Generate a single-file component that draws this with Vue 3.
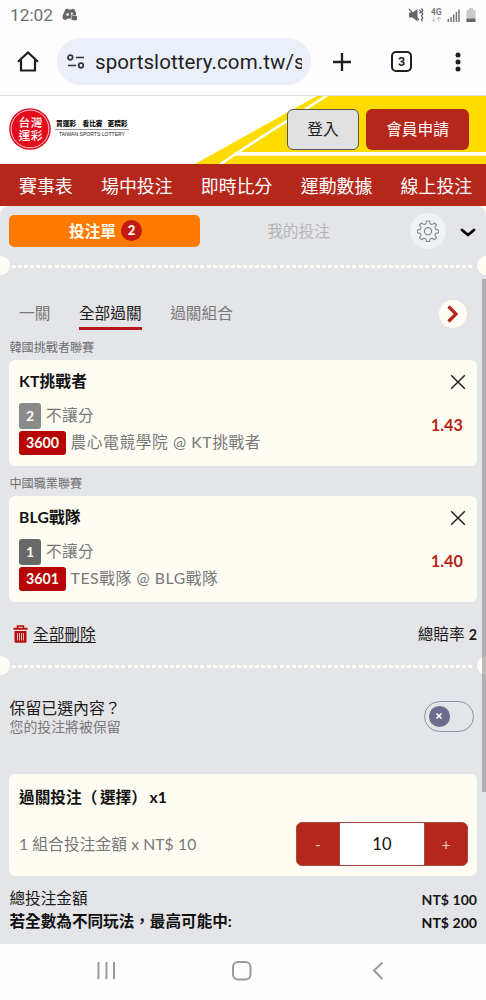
<script setup>
import { ref } from 'vue'

const nav = ['賽事表', '場中投注', '即時比分', '運動數據', '線上投注']
const tabs = ['一關', '全部過關', '過關組合']
const activeTab = ref(1)
const bets = ref([
  { league: '韓國挑戰者聯賽', title: 'KT挑戰者', pick: 2, market: '不讓分', code: '3600', match: '農心電競學院 @ KT挑戰者', odds: '1.43', shade: 'light' },
  { league: '中國職業聯賽', title: 'BLG戰隊', pick: 1, market: '不讓分', code: '3601', match: 'TES戰隊 @ BLG戰隊', odds: '1.40', shade: 'dark' }
])
const stake = ref(10)
</script>

<template>
  <div class="screen">
    <div class="status">
      <span class="clock">12:02</span>
      <svg class="discord" width="16" height="14" viewBox="0 0 16 14">
        <path d="M3.400 1.200 6 .6l.6 1h2.800l.6-1 2.600.8 1.600 4-.1 2.200H9v3H7.400L4.500 11l-.8 1.200L.9 11 .5 8z" fill="#666" />
        <circle cx="5.600" cy="6.600" r="1.300" fill="#fff" />
        <circle cx="9.800" cy="5.600" r="1.100" fill="#fff" />
        <path d="M9.500 8h5.500v4h-1.500l-1.200 1.500V12H9.500z" fill="#666" />
      </svg>
      <svg class="signals" width="70" height="18" viewBox="0 0 70 18">
        <path d="M1 6.500h3.500L9.500 3v12.500L4.500 11.500H1z" fill="#666" />
        <path d="M1 3l10 11" stroke="#666" stroke-width="1.400" />
        <path d="M11.500 4l1.500 1.700-1.500 1.700M13.500 2.500l1.300 1.800-1.300 1.900 1.300 1.900-1.300 1.900 1.300 1.900-1.300 1.900 1 1.500" fill="none" stroke="#666" stroke-width="1.300" />
        <text x="23" y="8.800" class="net" textLength="10.500">4G</text>
        <path d="M25.800 10.500v5m-2-2 2 2 2-2M30.700 16v-5m-2 2 2-2 2 2" fill="none" stroke="#bbb" stroke-width="1" />
        <path d="M40.300 16v-3M43 16v-5M45.700 16V8.500M48.400 16V6M51 16V3.500" stroke="#777" stroke-width="1.500" />
        <path d="M61 2h4v2h2.500v12h-9V4H61z" fill="#c9c9c9" />
        <path d="M58.500 12.500h9V16h-9z" fill="#666" />
      </svg>
    </div>

    <div class="browser">
      <svg class="home" width="24" height="24" viewBox="0 0 24 24">
        <path d="M2 11.800 12 2.500l10 9.300M5 10V20.500h14V10" fill="none" stroke="#1f1f1f" stroke-width="2.200" />
      </svg>
      <div class="address">
        <svg width="18" height="16" viewBox="0 0 18 16" fill="none" stroke="#333" stroke-width="1.700">
          <circle cx="3.300" cy="3.500" r="2.300" /><path d="M9 3.500h8M1 11.500h8" />
          <circle cx="14" cy="11.500" r="2.300" />
        </svg>
        <span class="url">sportslottery.com.tw/s</span>
      </div>
      <svg class="plus" width="20" height="20" viewBox="0 0 20 20"><path d="M1 10h18M10 1v18" stroke="#1f1f1f" stroke-width="2.300" /></svg>
      <div class="count">3</div>
      <svg class="dots" width="6" height="20" viewBox="0 0 6 20" fill="#1f1f1f"><circle cx="3" cy="3" r="2.500" /><circle cx="3" cy="10" r="2.500" /><circle cx="3" cy="17" r="2.500" /></svg>
    </div>

    <header class="brand">
      <svg class="stripes" width="486" height="69" viewBox="0 0 486 69">
        <path d="M195 69 317 1H486V69z" fill="#ffdc00" />
        <path d="M220 69.500 240 56 327 .5" fill="none" stroke="#fff" stroke-width="2.600" />
        <path d="M235 58.800H486" stroke="#fff" stroke-width="3.800" />
        <path d="M0 .5H486" stroke="#dedede" />
      </svg>
      <svg class="logo" width="130" height="44" viewBox="0 0 130 44">
        <circle cx="21" cy="22" r="20.800" fill="#e30b1c" />
        <circle cx="21" cy="22" r="18.900" fill="none" stroke="#fff" stroke-width=".8" />
        <text x="9.500" y="20" class="seal" textLength="24">台灣</text>
        <text x="9.500" y="32.500" class="seal" textLength="24">運彩</text>
        <text x="47" y="19" class="slogan" textLength="20">買運彩</text>
        <text x="73.500" y="19" class="slogan" textLength="20">看比賽</text>
        <text x="98.500" y="19" class="slogan" textLength="20">更精彩</text>
        <path d="M46 22.500h74" stroke="#777" stroke-width=".8" />
        <text x="50" y="29" class="english" textLength="66" lengthAdjust="spacingAndGlyphs">TAIWAN SPORTS LOTTERY</text>
      </svg>
      <button class="login">登入</button>
      <button class="apply">會員申請</button>
    </header>

    <nav class="menu"><span v-for="n in nav" :key="n">{{ n }}</span></nav>

    <main class="panel-wrap">
      <div class="panel">
        <div class="slip-head">
          <div class="slip-on">投注單<b>{{ bets.length }}</b></div>
          <div class="slip-off">我的投注</div>
          <div class="gear">
            <svg width="22" height="22" viewBox="0 0 22 22" fill="none" stroke="#85878a" stroke-width="1.100" stroke-linejoin="round">
              <path d="M9.500 1h3l.6 2.700 1.900.8L17.500 3l2 2-1.600 2.500.9 1.900 2.700.6v2.700l-2.700.7-.9 1.900 1.600 2.400-2 2-2.500-1.500-1.900.8-.6 2.600h-3l-.6-2.600-1.900-.8-2.500 1.500-2-2 1.600-2.400-.9-1.900L.5 12.700V10l2.700-.6.9-1.900L2.500 5l2-2L7 4.500l1.900-.8z" />
              <circle cx="11" cy="11.200" r="3.600" />
            </svg>
          </div>
          <svg class="fold" width="16" height="10" viewBox="0 0 16 10"><path d="M2 2l6 5 6-5" fill="none" stroke="#000" stroke-width="2.800" stroke-linecap="round" stroke-linejoin="round" /></svg>
        </div>
        <div class="divider"><i></i></div>
        <div class="tabs">
          <span v-for="(t, i) in tabs" :key="t" :class="{ on: i === activeTab }" @click="activeTab = i">{{ t }}</span>
          <div class="next">
            <svg width="12" height="20" viewBox="0 0 12 20"><path d="M1.500 2.500l7.500 7.500-7.500 7.500" fill="none" stroke="#b5261b" stroke-width="3.200" /></svg>
          </div>
        </div>

        <template v-for="b in bets" :key="b.code">
          <div class="league">{{ b.league }}</div>
          <section class="card bet">
            <div class="bet-title">{{ b.title }}</div>
            <div class="line first"><span class="pick" :class="b.shade">{{ b.pick }}</span><span class="market">{{ b.market }}</span></div>
            <div class="line"><span class="code">{{ b.code }}</span><span class="match">{{ b.match }}</span></div>
            <svg class="close" width="16" height="16" viewBox="0 0 16 16"><path d="M1.200 1.200l13.600 13.600M14.800 1.200 1.200 14.800" stroke="#1b1b1b" stroke-width="1.400" /></svg>
            <div class="odds">{{ b.odds }}</div>
          </section>
        </template>

        <div class="clear">
          <svg width="15" height="18" viewBox="0 0 15 18">
            <path d="M4.500 3V1h6v2" fill="none" stroke="#b80d0d" stroke-width="1.500" />
            <path d="M.5 2.800h14v2H.5zM1.500 6h12v10.500q0 1.300-1.300 1.300H2.800q-1.300 0-1.300-1.300z" fill="#b80d0d" />
            <path d="M4.500 8v7.500M6.500 8v7.500M8.500 8v7.500M10.500 8v7.500" stroke="#eee" stroke-width=".8" />
          </svg>
          <u>全部刪除</u>
          <span class="total-odds">總賠率 <b>2</b></span>
        </div>
        <div class="divider"><i></i></div>

        <div class="keep">
          <div>
            <div class="keep-q">保留已選內容？</div>
            <div class="keep-a">您的投注將被保留</div>
          </div>
          <div class="toggle"><span><svg width="8" height="8" viewBox="0 0 8 8"><path d="M1.500 1.500l5 5M6.500 1.500l-5 5" stroke="#fff" stroke-width="1.500" /></svg></span></div>
        </div>

        <section class="card combo">
          <div class="combo-title">過關投注<em>（</em>選擇<em>）</em>x1</div>
          <div class="combo-row">
            <span>1 組合投注金額 x NT$ 10</span>
            <div class="stepper">
              <button @click="stake -= 1">-</button>
              <div class="value">{{ stake }}</div>
              <button @click="stake += 1">+</button>
            </div>
          </div>
        </section>

        <div class="sums">
          <div><span>總投注金額</span><b>NT$ 100</b></div>
          <div class="strong"><span>若全數為不同玩法，最高可能中:</span><b>NT$ 200</b></div>
        </div>
        <div class="scrollbar"></div>
      </div>
    </main>

    <footer class="system">
      <svg width="486" height="56" viewBox="0 0 486 56" fill="none" stroke="#999" stroke-width="2">
        <path d="M98.500 18v17M106.500 18v17M114 18v17" />
        <rect x="233" y="18" width="17.500" height="17.500" rx="5" />
        <path d="M382.500 18.500 374 26.500l8.500 8.500" />
      </svg>
    </footer>
  </div>
</template>

<style>
body { margin: 0; background: #fdfdfd; }
</style>

<style scoped>
* { box-sizing: border-box; }
.screen { width: 486px; height: 1000px; overflow: hidden; background: #fdfdfd; font-family: Lato, "Noto Sans CJK TC", sans-serif; font-size: 15.7px; color: #1a1a1a; white-space: nowrap; }
button { font: inherit; padding: 0; border: 0; }
svg { display: block; flex: none; }

.status { height: 30px; display: flex; align-items: center; padding: 0 8px 0 10px; font-family: Roboto, sans-serif; }
.clock { width: 52px; font-size: 17.3px; color: #707070; }
.signals { margin-left: auto; margin-top: -1px; }
.net { font: bold 8.500px Roboto, sans-serif; fill: #777; }

.browser { height: 65px; display: flex; align-items: center; padding: 0 0 2px 16px; font-family: Roboto, sans-serif; color: #1f1f1f; }
.address { margin-left: 17px; width: 254px; height: 47px; border-radius: 24px; background: #ebeff9; display: flex; align-items: center; padding: 0 9px 0 10px; }
.url { margin-left: 10px; width: 207px; overflow: hidden; font-size: 20.500px; line-height: 30px; letter-spacing: .1px; }
.plus { margin-left: 21px; }
.count { margin-left: 39px; width: 21px; height: 21px; border: 2px solid #1f1f1f; border-radius: 5px; font-size: 12.500px; font-weight: 700; line-height: 17px; text-align: center; }
.dots { margin-left: 43px; }

.brand { position: relative; height: 69px; display: flex; align-items: center; padding: 0 17px 0 9px; background: #fff; }
.stripes { position: absolute; left: 0; top: 0; }
.logo { position: relative; margin-top: -1px; }
.seal { font: 500 11.800px "Noto Sans CJK TC", sans-serif; fill: #fff; }
.slogan { font: 900 6.700px "Noto Sans CJK TC", sans-serif; fill: #111; }
.english { font: 5px "Liberation Sans", sans-serif; fill: #222; }
.login, .apply { position: relative; height: 41px; border-radius: 6px; line-height: 39px; }
.login { margin-left: auto; width: 72px; background: #e1e1e1; border: 1px solid #555; color: #222; }
.apply { margin-left: 7px; width: 103px; background: #b5261b; color: #fff; }

.menu { height: 42px; background: #b5261b; display: flex; gap: 28.300px; padding-left: 19px; font-size: 17.900px; line-height: 44px; color: #fff; }

.panel-wrap { background: #fffdf3; }
.panel { position: relative; height: 738px; background: #e4e5e8; border-radius: 9px 9px 0 0; overflow: hidden; }
.slip-head { height: 50px; display: flex; align-items: center; padding-left: 9px; }
.slip-on { width: 191px; height: 32px; border-radius: 5px; background: #ff7a00; color: #fffdf3; font-weight: 700; display: flex; align-items: center; justify-content: center; padding: 0 0 1px 2px; }
.slip-on b { margin-left: 5px; width: 21px; height: 21px; border-radius: 50%; background: #c11b12; font-size: 13px; line-height: 20px; text-align: center; }
.slip-off { width: 197px; text-align: center; color: #b3b4b6; padding-bottom: 1px; }
.gear { margin-left: 13px; width: 36px; height: 36px; border-radius: 50%; background: #f0f1f4; display: grid; place-items: center; }
.fold { margin-left: 14px; margin-top: 3px; }

.divider { position: relative; height: 20px; overflow: hidden; padding: 9px 12px 0; }
.divider i { display: block; height: 2.500px; background: repeating-linear-gradient(90deg, #fffdf3 0 4px, transparent 4px 6.080px); }
.divider::before, .divider::after { content: ""; position: absolute; top: 0; width: 19px; height: 19px; border-radius: 50%; background: #fffdf3; }
.divider::before { left: -9.500px; }
.divider::after { right: -10px; }

.tabs { height: 62px; padding: 20px 19px 0 19px; display: flex; gap: 28.500px; color: #77787b; }
.tabs span { height: 34px; line-height: 34px; }
.tabs span.on { color: #1a1a1a; border-bottom: 3.500px solid #b8141b; }
.next { margin: 4px 0 0 auto; width: 28px; height: 28px; border-radius: 50%; background: #fffdf3; display: grid; place-items: center; }

.league { height: 22px; padding-left: 9.500px; font-size: 12.100px; line-height: 20px; color: #6d6e71; }
.card { position: relative; margin: 0 9px; border-radius: 6px; background: #fffdf3; }
.bet { height: 106px; padding: 10px 10px 0; margin-bottom: 8px; }
.bet-title { height: 24px; line-height: 23px; font-weight: 700; color: #111; letter-spacing: .15px; }
.line { height: 27px; line-height: 26px; display: flex; align-items: center; color: #77777a; gap: 4.500px; }
.line.first { margin-top: 8px; gap: 5px; }
.market { letter-spacing: .3px; padding-bottom: 1px; }
.match { letter-spacing: .62px; padding-bottom: 1px; }
.pick { width: 22px; height: 26px; border-radius: 3px; color: #fffdf3; font-size: 14px; font-weight: 700; text-align: center; }
.pick.light { background: #8a8a8a; }
.pick.dark { background: #686868; }
.code { width: 47px; height: 24px; line-height: 24px; border-radius: 3px; background: #b70404; color: #fffdf3; font-size: 14.200px; font-weight: 700; text-align: center; }
.close { position: absolute; right: 11.500px; top: 14px; }
.odds { position: absolute; right: 14px; top: 54px; font-size: 16.300px; line-height: 22px; font-weight: 700; color: #b5261b; }

.clear { height: 46px; display: flex; align-items: center; padding: 2px 9px 0 13px; line-height: 24px; }
.clear u { margin-left: 5px; text-underline-offset: 2px; text-decoration-thickness: 1px; }
.total-odds { margin-left: auto; }
.total-odds b { font-size: 14.200px; }

.keep { height: 98px; padding: 21px 12px 0 9.500px; display: flex; justify-content: space-between; }
.keep-q { font-size: 15.900px; line-height: 21px; }
.keep-a { font-size: 13.900px; line-height: 17px; color: #77787b; }
.toggle { margin-top: 4px; width: 50px; height: 31px; border: 1px solid #8f90a8; border-radius: 16px; padding: 4px; }
.toggle span { width: 20.500px; height: 20.500px; border-radius: 50%; background: #6c6c8c; display: grid; place-items: center; }

.combo { height: 102px; padding: 12px 9px 0 10px; }
.combo-title { height: 36px; line-height: 23px; font-weight: 700; color: #111; }
.combo-title em { font-style: normal; margin-right: 2.500px; }
.combo-row { display: flex; justify-content: space-between; line-height: 44px; color: #77777a; letter-spacing: .1px; }
.stepper { display: flex; width: 172px; height: 44px; border: 1px solid #a44b43; border-radius: 6px; overflow: hidden; background: #b5261b; }
.stepper button { width: 42px; background: #b5261b; color: #f0c9c2; line-height: 41px; }
.value { flex: 1; background: #fff; color: #111; text-align: center; font-size: 16.500px; line-height: 43px; border: solid #a44b43; border-width: 0 1px; }

.sums { padding: 11px 9px 0 9.500px; font-size: 15.600px; }
.sums div { display: flex; justify-content: space-between; height: 23px; line-height: 23px; }
.sums b { font-size: 14.100px; font-weight: 700; line-height: 25px; }
.strong { font-weight: 700; color: #111; }
.scrollbar { position: absolute; right: 0; top: 73px; width: 4px; height: 513px; background: rgba(145, 146, 148, .62); }
.system { height: 56px; background: #fefefe; }
</style>
